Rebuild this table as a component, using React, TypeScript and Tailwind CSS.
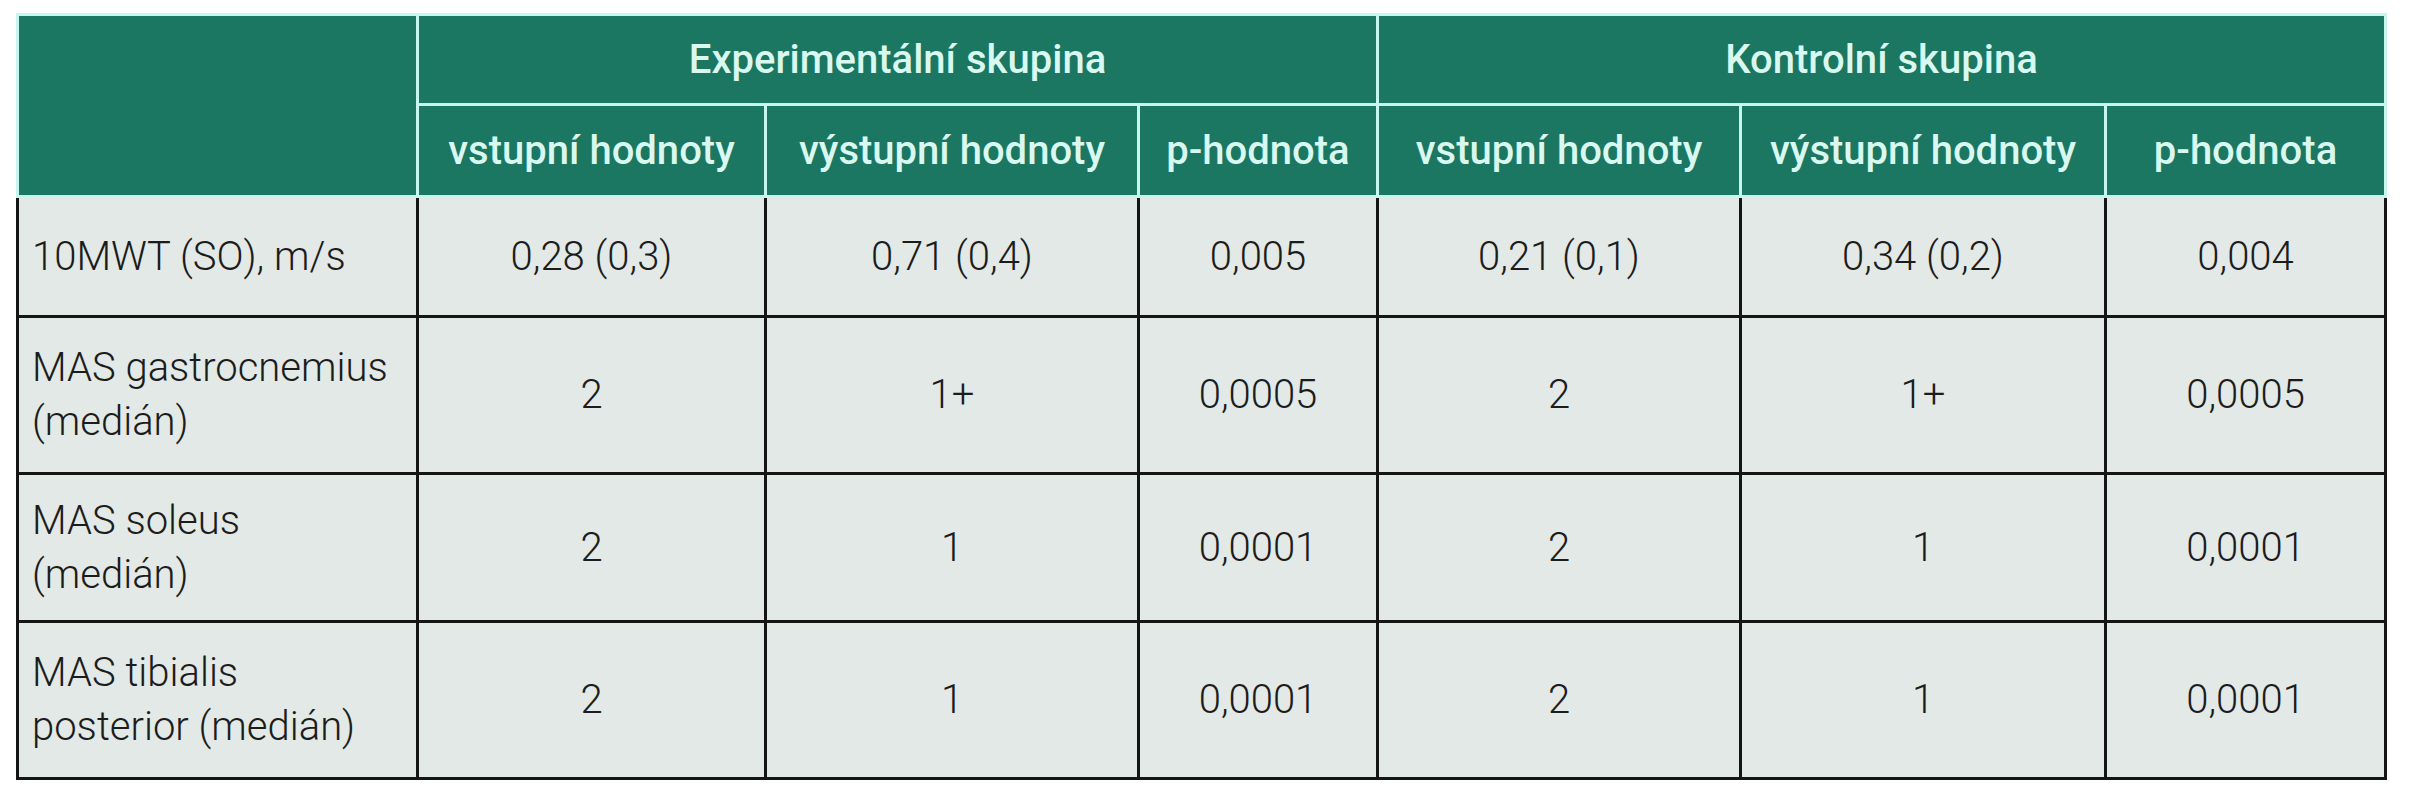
import React from "react";

const rows: { label: React.ReactNode; vals: string[]; h: string }[] = [
  { label: "10MWT (SO), m/s", vals: ["0,28 (0,3)", "0,71 (0,4)", "0,005", "0,21 (0,1)", "0,34 (0,2)", "0,004"], h: "h-[120px]" },
  { label: <>MAS gastrocnemius<br />(medián)</>, vals: ["2", "1+", "0,0005", "2", "1+", "0,0005"], h: "h-[157px]" },
  { label: <>MAS soleus<br />(medián)</>, vals: ["2", "1", "0,0001", "2", "1", "0,0001"], h: "h-[148px]" },
  { label: <>MAS tibialis<br />posterior (medián)</>, vals: ["2", "1", "0,0001", "2", "1", "0,0001"], h: "h-[157px]" },
];

export default function App() {
  const th = "border-[3px] border-[#c6f6ee] bg-[#1b7662] text-[#d8f8f0] font-medium text-[40px] leading-[48px] text-center align-middle p-0";
  const td = "border-[3px] border-[#151515] bg-[#e2e9e6] text-[#1c1c1c] font-light text-[40px] leading-[54px] text-center align-middle p-0";
  return (
    <div className="w-[2414px] h-[800px] bg-white pt-[13px] pl-[16px] font-['Roboto','Liberation_Sans',sans-serif]">
      <table className="table-fixed border-collapse w-[2368px]">
        <colgroup>
          <col className="w-[400px]" />
          <col className="w-[348px]" />
          <col className="w-[373px]" />
          <col className="w-[239px]" />
          <col className="w-[363px]" />
          <col className="w-[365px]" />
          <col className="w-[280px]" />
        </colgroup>
        <thead>
          <tr className="h-[90px]">
            <th rowSpan={2} className={th}></th>
            <th colSpan={3} className={th}>Experimentální skupina</th>
            <th colSpan={3} className={th}>Kontrolní skupina</th>
          </tr>
          <tr className="h-[92px]">
            <th className={th}>vstupní hodnoty</th>
            <th className={th}>výstupní hodnoty</th>
            <th className={th}>p-hodnota</th>
            <th className={th}>vstupní hodnoty</th>
            <th className={th}>výstupní hodnoty</th>
            <th className={th}>p-hodnota</th>
          </tr>
        </thead>
        <tbody>
          {rows.map((r, i) => (
            <tr key={i} className={r.h}>
              <td className={`${td} text-left pl-[13px]`}>{r.label}</td>
              {r.vals.map((v, j) => (
                <td key={j} className={td}>{v}</td>
              ))}
            </tr>
          ))}
        </tbody>
      </table>
    </div>
  );
}
